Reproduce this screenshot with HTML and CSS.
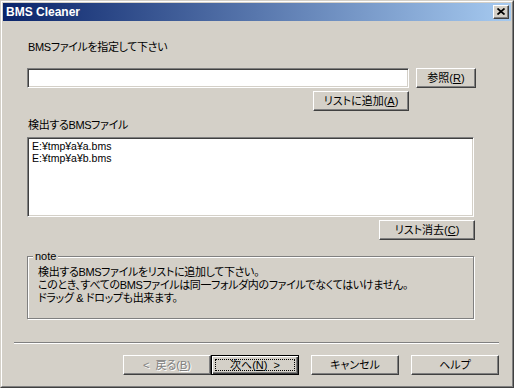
FILE: index.html
```html
<!DOCTYPE html>
<html lang="ja">
<head>
  <meta charset="UTF-8">
  <title>BMS Cleaner</title>
  <link rel="stylesheet" href="styles.css">
</head>
<body>
  <div class="window">
    <div class="frame">
      <!-- Title Bar -->
      <div class="titlebar">
        <span class="title">BMS Cleaner</span>
        <span class="close">
          <svg width="8" height="7" viewBox="0 0 8 7"><path d="M0.5 0.5 L7.5 6.5 M7.5 0.5 L0.5 6.5" stroke="#000" stroke-width="1.7" fill="none"/></svg>
        </span>
      </div>

      <div class="client">
        <div class="content">
          <p class="label first">BMSファイルを指定して下さい</p>
          <div class="row-input">
            <div class="edit"></div>
            <button class="btn browse">参照(<u>R</u>)</button>
          </div>
          <div class="row-add">
            <button class="btn add">リストに追加(<u>A</u>)</button>
          </div>

          <p class="label second">検出するBMSファイル</p>
          <div class="listbox">
            <div>E:¥tmp¥a¥a.bms</div>
            <div>E:¥tmp¥a¥b.bms</div>
          </div>
          <div class="row-clear">
            <button class="btn clear">リスト消去(<u>C</u>)</button>
          </div>

          <!-- Note Group -->
          <div class="group">
            <span class="group-label">note</span>
            <p>検出するBMSファイルをリストに追加して下さい。</p>
            <p>このとき、すべてのBMSファイルは同一フォルダ内のファイルでなくてはいけません。</p>
            <p>ドラッグ &amp; ドロップも出来ます。</p>
          </div>
        </div>

        <div class="sep"></div>

        <div class="footer">
          <button class="btn wiz disabled">&lt;&nbsp;&nbsp;戻る(<u>B</u>)</button>
          <button class="btn wiz default"><span class="focus">次へ(<u>N</u>)&nbsp;&nbsp;&gt;</span></button>
          <button class="btn wiz gap">キャンセル</button>
          <button class="btn wiz gap">ヘルプ</button>
        </div>
      </div>
    </div>
  </div>
</body>
</html>
```

FILE: styles.css
```css
/* General Styles */
* {
  box-sizing: border-box;
}
body {
  margin: 0;
  padding: 0;
  background: #d4d0c8;
  font-family: "Liberation Sans", "Noto Sans CJK JP", sans-serif;
  font-size: 11px;
  font-feature-settings: "palt";
  color: #000;
}
p {
  margin: 0;
}

/* Window frame */
.window {
  width: 514px;
  height: 388px;
  border: 1px solid;
  border-color: #d4d0c8 #404040 #404040 #d4d0c8;
}
.frame {
  height: 100%;
  border: 1px solid;
  border-color: #fff #808080 #808080 #fff;
  padding: 1px;
  display: flex;
  flex-direction: column;
}
.titlebar {
  height: 18px;
  background: linear-gradient(to right, #0a246a, #a6caf0);
  display: flex;
  align-items: center;
  justify-content: space-between;
  padding: 0 2px 0 3px;
}
.title {
  color: #fff;
  font-weight: bold;
  font-size: 12px;
  font-feature-settings: normal;
}
.close {
  width: 16px;
  height: 14px;
  background: #d4d0c8;
  border: 1px solid;
  border-color: #fff #404040 #404040 #fff;
  box-shadow: inset -1px -1px #808080;
  display: flex;
  align-items: center;
  justify-content: center;
  padding: 0 1px 1px 0;
}

/* Client area */
.client {
  flex: 1;
  display: flex;
  flex-direction: column;
}
.content {
  padding-left: 24px;
}
.label {
  line-height: 13px;
  padding-left: 1px;
  letter-spacing: -0.35px;
}
.label.first {
  margin-top: 20px;
}
.label.second {
  margin-top: 8px;
}

/* Buttons */
.btn {
  font: inherit;
  font-size: 11px;
  height: 20px;
  padding: 0;
  margin: 0;
  background: #d4d0c8;
  color: #000;
  border: 1px solid;
  border-color: #fff #404040 #404040 #fff;
  box-shadow: inset -1px -1px #808080;
  display: flex;
  align-items: center;
  justify-content: center;
  line-height: 13px;
}
.btn u {
  text-decoration: underline;
  text-underline-offset: 1px;
}

.row-input {
  margin-top: 14px;
  display: flex;
}
.edit {
  width: 382px;
  height: 20px;
  background: #fff;
  border: 1px solid;
  border-color: #808080 #fff #fff #808080;
  box-shadow: inset 1px 1px #404040, inset -1px -1px #d4d0c8;
}
.browse {
  width: 60px;
  margin-left: 7px;
}
.row-add {
  margin-top: 3px;
  width: 382px;
  display: flex;
  justify-content: flex-end;
}
.add {
  width: 96px;
}

.listbox {
  margin-top: 5px;
  width: 447px;
  height: 80px;
  background: #fff;
  border: 1px solid;
  border-color: #808080 #fff #fff #808080;
  box-shadow: inset 1px 1px #404040, inset -1px -1px #d4d0c8;
  padding: 2px 0 0 4px;
  font-size: 10.5px;
  line-height: 12px;
}
.row-clear {
  margin-top: 3px;
  width: 448px;
  display: flex;
  justify-content: flex-end;
}
.clear {
  width: 96px;
}

/* Group box */
.group {
  position: relative;
  margin-top: 16px;
  width: 447px;
  height: 63px;
  border: 1px solid #808080;
  box-shadow: inset 1px 1px #fff, 1px 1px #fff;
  padding: 9px 0 0 10px;
  line-height: 13px;
}
.group p {
  letter-spacing: -0.35px;
}
.group-label {
  position: absolute;
  top: -7px;
  left: 5px;
  padding: 0 2px;
  background: #d4d0c8;
  line-height: 13px;
}

/* Footer */
.sep {
  margin: 23px 12px 0 11px;
  height: 2px;
  border-top: 1px solid #808080;
  border-bottom: 1px solid #fff;
}
.footer {
  margin-top: 11px;
  padding-right: 12px;
  display: flex;
  justify-content: flex-end;
}
.wiz {
  width: 88px;
}
.wiz.gap {
  margin-left: 12px;
}
.wiz.disabled {
  color: #808080;
  text-shadow: 1px 1px #fff;
}
.wiz.default {
  border: 1px solid #000;
  box-shadow: inset 1px 1px #fff, inset -1px -1px #404040, inset -2px -2px #808080;
  padding: 3px;
}
.focus {
  width: 100%;
  height: 100%;
  border: 1px dotted #000;
  display: flex;
  align-items: center;
  justify-content: center;
}
```
